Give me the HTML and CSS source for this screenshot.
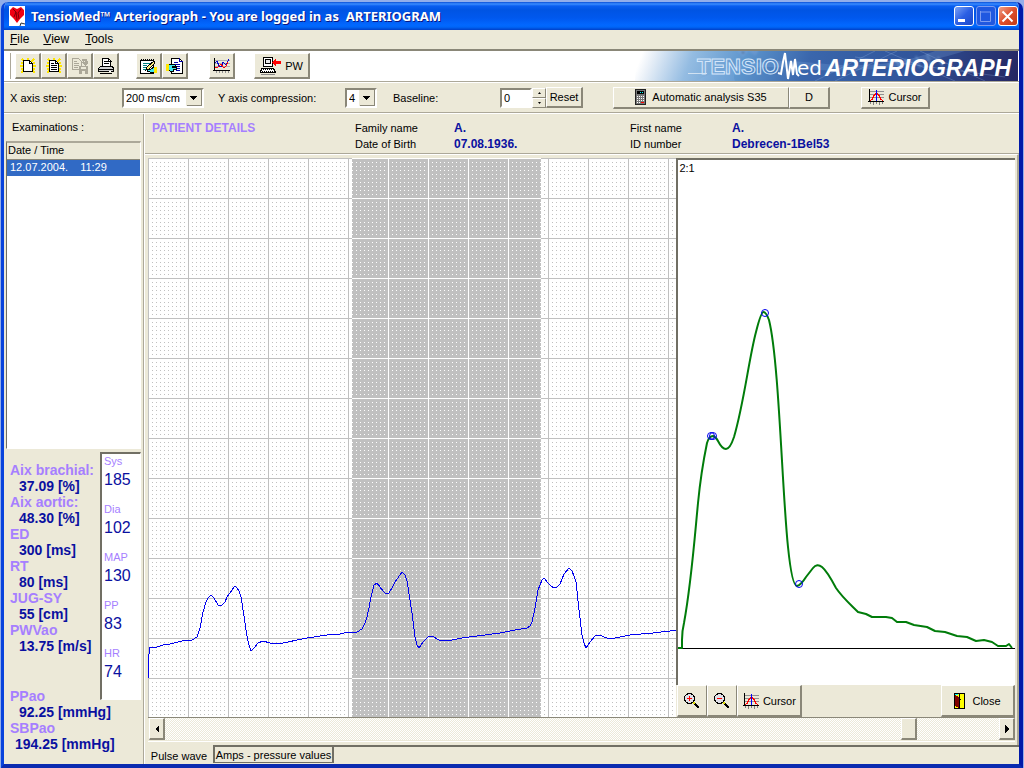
FILE: index.html
```html
<!DOCTYPE html>
<html lang="en">
<head>
<meta charset="utf-8">
<title>TensioMed Arteriograph</title>
<link rel="stylesheet" href="styles.css">
</head>
<body>
<svg class="defs" width="0" height="0" aria-hidden="true">
  <defs>
    <symbol id="page" viewBox="0 0 16 16">
      <path d="M2 1l3 3M8 0v2M14 1l-3 3M0 8h3M1 15l3-3M13 8h3M15 15l-2-2M1 5h2M13 5h2M1 11h2M13 11h2" stroke="#ffe600" stroke-width="2"/>
      <path d="M3.500 2.500h6l3 3v8h-9z" fill="#fff" stroke="#000"/>
      <path d="M9.500 2.500v3h3" fill="none" stroke="#000"/>
    </symbol>
    <symbol id="cursor" viewBox="0 0 16 16">
      <path d="M1 2.500h15M1 5.500h15M1 8.500h15" stroke="#909090"/>
      <path d="M1.500 0v13M0 12.500h16" stroke="#000" fill="none"/>
      <path d="M2.500 13v2M5.500 13v3M8.500 13v2M11.500 13v3M14.500 13v2" stroke="#808080" fill="none"/>
      <path d="M2 11.500l2-1 2-4 2-2h1l2 2 2 4 2 1" stroke="#f00" fill="none"/>
      <path d="M8.500 1v11" stroke="#00f"/>
    </symbol>
    <symbol id="lens" viewBox="0 0 16 16">
      <path d="M9 9l2 2" stroke="#dede00" stroke-width="2"/>
      <path d="M11 11l4 4" stroke="#000" stroke-width="2"/>
      <circle cx="5.500" cy="5.500" r="5" fill="#e0e0e8" stroke="#000"/>
      <path d="M3 5.500h5" stroke="#f00"/>
    </symbol>
    <pattern id="grid" width="40" height="40" patternUnits="userSpaceOnUse">
      <rect width="40" height="40" fill="#fff"/>
      <path d="M0 .5h40M.5 0v40" stroke="#c0c0c0"/>
      <path d="M4 4.500h36M4 8.500h36M4 12.500h36M4 16.500h36M4 20.500h36M4 24.500h36M4 28.500h36M4 32.500h36M4 36.500h36" stroke="#c0c0c0" stroke-dasharray="1 3"/>
    </pattern>
    <pattern id="grid-selected" width="40" height="40" patternUnits="userSpaceOnUse">
      <rect width="40" height="40" fill="#c0c0c0"/>
      <path d="M0 .5h40M.5 0v40" stroke="#fff"/>
      <path d="M4 4.500h36M4 8.500h36M4 12.500h36M4 16.500h36M4 20.500h36M4 24.500h36M4 28.500h36M4 32.500h36M4 36.500h36" stroke="#fff" stroke-dasharray="1 3"/>
    </pattern>
  </defs>
</svg>
<div class="window">
  <header class="titlebar">
    <svg class="app-icon" width="16" height="20" viewBox="0 0 16 20">
      <path d="M0 0h16v20H0z" fill="#fff"/>
      <path d="M1 4l3-3 4 2 4-2 3 3v5l-4 4-3 4-3-4-4-4z" fill="#f00012"/>
      <path d="M4 3l3 3-2 5M12 3l-3 4 1 6M7 6l1 8" stroke="#7c0008" fill="none"/>
      <path d="M11 20l1-3 4 1" fill="#dfe8f8" stroke="#333"/>
    </svg>
    <h1 class="title">TensioMed™ Arteriograph - You are logged in as&nbsp; ARTERIOGRAM</h1>
    <div class="window-buttons">
      <button class="wb" aria-label="Minimize"><svg width="19" height="19"><path d="M4 12h7v3H4z" fill="#fff"/></svg></button>
      <button class="wb wb-off" aria-label="Maximize" disabled><svg width="19" height="19"><path d="M4.500 4v10.500h10V5M4 5h11" fill="none" stroke="#7d9cf0"/></svg></button>
      <button class="wb wb-close" aria-label="Close window"><svg width="19" height="19"><path d="M4.500 4.500l10 10M14.500 4.500l-10 10" stroke="#fff" stroke-width="2"/></svg></button>
    </div>
  </header>
  <nav class="menu">
    <button><u>F</u>ile</button><button><u>V</u>iew</button><button><u>T</u>ools</button>
  </nav>
  <div class="banner">
    <div class="tools">
      <span class="grip"></span>
      <div class="tool-group">
        <button class="raised tool" aria-label="New"><svg class="px" width="16" height="16"><use href="#page"/></svg></button>
        <button class="raised tool" aria-label="Open"><svg class="px" width="16" height="16"><use href="#page"/><path d="M5 5.500h3M5 7.500h6M5 9.500h6M5 11.500h6" stroke="#000"/></svg></button>
        <button class="raised tool" aria-label="Save" disabled><svg class="px" width="16" height="16"><path d="M.5.500h6l3 3v8h-9zM2 3.500h3M2 5.500h5M2 7.500h5M2 9.500h4" fill="none" stroke="#aca899"/><path d="M10 1.500h3.500v4M11 4l2.500 2.500L16 4" fill="none" stroke="#aca899" stroke-width="2"/><path d="M7 8h9v8H7z" fill="#aca899"/><path d="M9 9h5v2H9zM10 13h3v3h-3z" fill="#ece9d8"/></svg></button>
        <button class="raised tool" aria-label="Print"><svg class="px" width="16" height="16"><path d="M4.500.500h6l2 2v6h-8z" fill="#fff" stroke="#000"/><path d="M6 3.500h4M6 5.500h5M10.500 0v3h3" stroke="#000" fill="none"/><path d="M2.500 8.500h12l1 2v3H.5v-3z" fill="#d0d0d0" stroke="#000"/><path d="M1 11.500h14M2 15.500h12" stroke="#000"/><path d="M11 13h2" stroke="#fff"/></svg></button>
      </div>
      <div class="tool-group">
        <button class="raised tool" aria-label="Edit patient"><svg class="px" width="17" height="16"><path d="M.5 2.500h13v13H.5z" fill="#fff" stroke="#000"/><path d="M1 1.500h14" stroke="#000" stroke-width="2" stroke-dasharray="1 1"/><path d="M3 5.500h7M3 7.500h4M3 9.500h3M3 11.500h4" stroke="#008080"/><path d="M14 3l-7 6-1 3 3-1 6-6z" fill="#ffec80" stroke="#000"/><path d="M7 11h4l3-2 1 5h-5l-3-1z" fill="#40e8f0" stroke="#000"/><path d="M14 9h3v6h-3z" fill="#ffe800"/></svg></button>
        <button class="raised tool" aria-label="Patient record"><svg class="px" width="17" height="16"><path d="M5.500.500h8l3 3v12h-11z" fill="#fff" stroke="#000"/><path d="M13.500 0v3.500h3M8 4.500h4M8 6.500h6M8 8.500h6M10 10.500h4M10 12.500h4" stroke="#00a" fill="none"/><path d="M3 6h5l2 2H6v1h4v2H7v2H4l-2-2z" fill="#40e8f0" stroke="#000"/><path d="M0 6h3v7H0z" fill="#ffe800"/></svg></button>
      </div>
      <div class="tool-group chart-group">
        <button class="raised tool" aria-label="Charts"><svg class="px" width="17" height="16"><path d="M1 2.500h16M1 5.500h16M1 8.500h16" stroke="#b0b0b0"/><path d="M1.500 0v13M0 12.500h17" stroke="#000" fill="none"/><path d="M3.500 13v2M6.500 13v2M9.500 13v2M12.500 13v2M15.500 13v2" stroke="#909090" fill="none"/><path d="M2 5l2-2 2 5 2 1 2-5 3 3 3-6" stroke="#0000d0" fill="none"/><path d="M2 10l3-1 3-3 3 4 2-2 2-4" stroke="#f00" fill="none"/></svg></button>
      </div>
      <button class="raised tool pw"><svg class="px" width="21" height="18"><path d="M3.500.500h9v9h-9z" fill="#fff" stroke="#000"/><path d="M5.500 2.500h5v4h-5z" fill="#e8e8e8" stroke="#000"/><path d="M1.500 11.500h12l2 4H.5z" fill="#fff" stroke="#000"/><path d="M3 12.500h10M2 14.500h12" stroke="#000" stroke-dasharray="1 1"/><path d="M1 17h14" stroke="#888"/><path d="M12 5.500l4-4V4h5v3h-5v2.500z" fill="#f00"/></svg>PW</button>
    </div>
    <svg class="logo" width="384" height="30" viewBox="0 0 384 30" role="img" aria-label="TensioMed Arteriograph">
      <defs>
        <linearGradient id="sky" gradientUnits="userSpaceOnUse" x1="8" y1="0" x2="379" y2="140">
          <stop offset="0" stop-color="#fff"/><stop offset=".03" stop-color="#e6eef7"/><stop offset=".12" stop-color="#94bce2"/><stop offset=".25" stop-color="#5c94cc"/><stop offset=".4" stop-color="#3a66ac"/><stop offset=".65" stop-color="#30549a"/><stop offset=".9" stop-color="#252763"/>
        </linearGradient>
      </defs>
      <path d="M0 0h383v30H0z" fill="url(#sky)"/>
      <path d="M60 30Q110 4 180 12t120-12h30Q250 25 170 18T100 30z" fill="#8fc0ee" opacity=".2"/>
      <path d="M180 30L240 0M200 30L262 0M250 0l70 30M285 0l65 30M220 6l150 20" stroke="#a8c8f0" opacity=".25" fill="none"/>
      <path class="ghost" d="M104 0h8l-4 4zM116 0h6l-2 3zM254 12l3 6M262 10l3 7M270 8l4 8M281 5l4 12M292 3l6 18M303 6l5 10" stroke="#7ea4da" stroke-width="2" opacity=".5"/>
      <path d="M53 22.500h19" stroke="#fff" opacity=".6"/>
      <text class="logo-outline" x="62" y="23">TENSIO</text>
      <path d="M143 22l3 1 2-12 2-9 3 26 3-18 2 14 2-16 2 15 2 2" fill="none" stroke="#fff" stroke-width="2"/>
      <text class="logo-script" x="162" y="24">ed</text>
      <text class="logo-main" x="190" y="25">ARTERIOGRAPH</text>
    </svg>
  </div>
  <div class="controls">
    <label class="lb-x" for="x-step">X axis step:</label>
    <select class="combo combo-x" id="x-step"><option>200 ms/cm</option></select>
    <label class="lb-y" for="y-comp">Y axis compression:</label>
    <select class="combo combo-y" id="y-comp"><option>4</option></select>
    <label class="lb-base" for="baseline">Baseline:</label>
    <input class="field" id="baseline" type="text" value="0">
    <div class="spin">
      <button class="raised" aria-label="Increase"><svg width="3" height="2"><path d="M0 2l1.500-2L3 2z"/></svg></button>
      <button class="raised" aria-label="Decrease"><svg width="3" height="2"><path d="M0 0l1.500 2L3 0z"/></svg></button>
    </div>
    <button class="raised reset">Reset</button>
    <button class="raised auto"><svg class="px" width="11" height="16"><path d="M0 0h11v16H0z" fill="#222"/><path d="M1 1h9v14H1z" fill="#777"/><path d="M2 2h7v3H2z" fill="#000"/><path d="M5 3.500h3" stroke="#0ff" stroke-dasharray="1 1"/><path d="M2 7.500h7M2 9.500h7M2 11.500h7" stroke="#fff" stroke-dasharray="1 1"/><path d="M2 13.500h3" stroke="#fff" stroke-dasharray="1 1"/><path d="M6 13.500h3" stroke="#f00"/></svg>Automatic analysis S35</button>
    <button class="raised dee">D</button>
    <button class="raised cur"><svg class="px" width="16" height="16"><use href="#cursor"/></svg>Cursor</button>
  </div>
  <main class="work">
    <aside class="side">
      <h2 class="side-title">Examinations :</h2>
      <div class="list">
        <table>
          <thead><tr><th>Date / Time</th></tr></thead>
          <tbody><tr><td>12.07.2004.<span class="time">11:29</span></td></tr></tbody>
        </table>
      </div>
      <div class="stats">
        <dl class="indices">
          <dt>Aix brachial:</dt><dd>37.09 [%]</dd>
          <dt>Aix aortic:</dt><dd>48.30 [%]</dd>
          <dt>ED</dt><dd>300 [ms]</dd>
          <dt>RT</dt><dd>80 [ms]</dd>
          <dt>JUG-SY</dt><dd>55 [cm]</dd>
          <dt>PWVao</dt><dd>13.75 [m/s]</dd>
        </dl>
        <dl class="vitals">
          <dt>Sys</dt><dd>185</dd>
          <dt>Dia</dt><dd>102</dd>
          <dt>MAP</dt><dd>130</dd>
          <dt>PP</dt><dd>83</dd>
          <dt>HR</dt><dd>74</dd>
        </dl>
        <dl class="indices central">
          <dt>PPao</dt><dd>92.25 [mmHg]</dd>
          <dt>SBPao</dt><dd class="wide">194.25 [mmHg]</dd>
        </dl>
      </div>
    </aside>
    <section class="main">
      <div class="patient">
        <h2>PATIENT DETAILS</h2>
        <span>Family name</span><b>A.</b><span>First name</span><b>A.</b>
        <span class="second">Date of Birth</span><b>07.08.1936.</b><span>ID number</span><b>Debrecen-1Bel53</b>
      </div>
      <div class="sheet">
        <div class="views">
          <svg class="pulse px" role="img" aria-label="Pulse wave">
            <rect width="100%" height="100%" fill="url(#grid)"/>
            <rect x="204" width="189" height="100%" fill="url(#grid-selected)"/>
            <polyline transform="translate(-148 -158)" fill="none" stroke="#0000f0" points="148.500,678 148.500,660 149.500,648 157,647 163,645 170,644 182,641 192,640 197,637 200,628 203,612 206,602 208,598 211,595 214,598 218,605 222,605 225,602 227,597 232,590 235,586 237,588 239,591 241,597 242,603 245,623 247,636 249,645 251,651 255,647 258,643 263,641 270,643 277,644 283,643 307,638 327,635 340,634 348,632 357,632 362,629 365,623 367,617 369,608 371,597 374,585 377,583 380,587 383,591 386,594 389,593 392,588 395,582 402,572 405,575 407,581 408,587 412,613 415,637 417,645 419,648 423,642 428,637 432,636 439,640 452,640 462,638 477,636 500,633 515,630 527,628 530,626 532,622 535,608 538,590 542,580 544,578 548,583 551,586 554,588 557,587 560,584 564,574 569,568 572,571 574,576 576,582 579,610 582,635 584,643 586,648 590,642 596,635 602,636 609,639 615,638 630,635 653,633 678,630"/>
          </svg>
          <div class="detail">
            <div class="beat">
              <svg role="img" aria-label="Averaged beat">
                <path d="M0 488.500h100000" stroke="#000"/>
                <g transform="translate(-679 -160)" fill="none">
                  <path stroke="#007c0a" stroke-width="2" stroke-linejoin="round" d="M678 648H683V640Q683 631 685 623C692 585 695 545 699 503Q702 472 708 443Q710 436 714 436Q717 437 719 441Q723 449 727 449Q731 449 735 437C745 403 750 358 757 332Q762 312 764.500 312Q767 312 770 320C780 360 783 490 789 547Q793 586 798 586Q802 585 807 577L814 568Q818 563 823 567Q828 571 837 588C843 597 850 603 859 612L867 614 873 617H887L893 618 898 622 907 622 915 625 928 627 936 631 946 632 958 636 968 637 977 641 985 640 993 642 999 646H1007L1010 644 1013 648"/>
                  <g stroke="#0000f0"><circle cx="712" cy="436" r="3.500"/><circle cx="714" cy="436" r="3.500"/><circle cx="766" cy="313" r="3.500"/><circle cx="800" cy="584" r="3.500"/></g>
                </g>
              </svg>
              <span class="ratio">2:1</span>
            </div>
            <div class="actions">
              <button class="raised zoom" aria-label="Zoom in"><svg class="px" width="16" height="16"><use href="#lens"/><path d="M5.500 3v5" stroke="#f00"/></svg></button>
              <button class="raised zoom" aria-label="Zoom out"><svg class="px" width="16" height="16"><use href="#lens"/></svg></button>
              <button class="raised cursor2"><svg class="px" width="16" height="16"><use href="#cursor"/></svg>Cursor</button>
              <button class="raised close"><svg class="px" width="11" height="16"><path d="M.5.500h10v15H.5z" fill="#ff0" stroke="#000"/><path d="M1 1h3v1H1z" fill="#0ff"/><path d="M1 2l4 2v11l-4-2z" fill="#800000"/><path d="M5 1v14M6 6h1" stroke="#000"/></svg>Close</button>
            </div>
          </div>
        </div>
        <div class="scroller">
          <button class="raised" aria-label="Scroll left"><svg class="px" width="4" height="8"><path d="M4 0v8L0 4z"/></svg></button>
          <input type="range" min="0" max="100" value="90" aria-label="Scroll position">
          <button class="raised" aria-label="Scroll right"><svg class="px" width="4" height="8"><path d="M0 0v8l4-4z"/></svg></button>
        </div>
      </div>
      <div class="tabs" role="tablist">
        <button class="tab tab-on" role="tab" aria-selected="true">Pulse wave</button>
        <button class="tab tab-off" role="tab" aria-selected="false">Amps - pressure values</button>
        <span class="tab-rest"></span>
      </div>
    </section>
  </main>
</div>
</body>
</html>
```
FILE: styles.css
```css
* { box-sizing: border-box; }
body {
  margin: 0;
  padding: 2px 1px 0;
  height: 100vh;
  background: #93aeea;
  font: 11px/16px "Liberation Sans", Arial, sans-serif;
  color: #000;
  overflow: hidden;
}
h1, h2 { margin: 0; font-size: inherit; font-weight: normal; }
dl, dd { margin: 0; }
button, input, select { font: inherit; color: inherit; margin: 0; padding: 0; border-radius: 0; }
svg { display: block; flex: none; }
.defs { position: absolute; }
.px { shape-rendering: crispEdges; }

.window {
  display: flex;
  flex-direction: column;
  height: 100%;
  border: solid;
  border-width: 0 4px 4px 3px;
  border-color: #0831d9 #0019a8 #0a2bb0 #0843dc;
  border-radius: 7px 7px 0 0;
  background: #ece9d8;
  overflow: hidden;
}
.titlebar {
  display: flex;
  align-items: center;
  gap: 6px;
  height: 28px;
  margin: 0 -4px 0 -3px;
  padding: 0 5px 0 8px;
  background: linear-gradient(#0a4fd8, #3a8cff 2px, #0a5ef0 4px, #0054e3 8px, #0058ee 16px, #0268ff 23px, #0066f8 25px, #0040c8);
}
.title {
  flex: 1;
  font: bold 13px/20px "Noto Sans", "Open Sans", sans-serif;
  color: #fff;
  text-shadow: 1px 1px 0 #0a1883;
  white-space: nowrap;
}
.window-buttons { display: flex; gap: 2px; }
.wb {
  width: 20px;
  height: 20px;
  border: 1px solid #fff;
  border-radius: 3px;
  background: linear-gradient(135deg, #7ba2f5, #2b5fe4 50%, #1c48c8);
}
.wb svg { margin: -1px; }
.wb-off { border-color: #7d9cf0; background: #2058e0; }
.wb-close { background: linear-gradient(135deg, #f0a088, #dd4f2c 50%, #c23a14); }

.menu { display: flex; gap: 14px; height: 19px; padding: 0 6px; }
.menu button { border: 0; background: none; font-size: 12px; line-height: 17px; }
.menu button:last-child { padding-left: 2px; }

.raised {
  display: flex;
  align-items: center;
  justify-content: center;
  border: solid;
  border-width: 1px 2px 2px 1px;
  border-color: #fff #8a8778 #8a8778 #fff;
  background: #ece9d8;
  white-space: nowrap;
}
.banner {
  display: flex;
  justify-content: space-between;
  height: 33px;
  border-top: 2px solid #8a8778;
  border-bottom: 1px solid #aca899;
  background: #fff;
}
.tools { display: flex; align-items: center; padding-left: 5px; }
.grip { width: 2px; height: 26px; margin-right: 4px; border-right: 1px solid #aca899; }
.tool-group { display: flex; margin-right: 17px; }
.chart-group { margin: 0 19px 0 4px; }
.tool { width: 26px; height: 26px; }
.pw { width: 56px; gap: 4px; }
.ghost { filter: blur(1px); }
.logo-outline { font: bold 22px "Liberation Sans", sans-serif; fill: none; stroke: #d4e6fa; stroke-width: 1px; }
.logo-script { font: 20px "DejaVu Sans", sans-serif; fill: #fff; }
.logo-main { font: italic bold 23px "Liberation Sans", sans-serif; fill: #fff; }

.controls {
  display: flex;
  align-items: center;
  height: 31px;
  padding-left: 6px;
  border-top: 1px solid #fff;
  border-bottom: 1px solid #aca899;
}
.combo, .field {
  height: 20px;
  padding: 0 2px;
  border: 2px solid;
  border-color: #8a8778 #fff #fff #8a8778;
  background: #fff;
}
.combo {
  appearance: none;
  background:
    linear-gradient(#000, #000) right 5px top 6px / 7px 1px no-repeat,
    linear-gradient(#000, #000) right 6px top 7px / 5px 1px no-repeat,
    linear-gradient(#000, #000) right 7px top 8px / 3px 1px no-repeat,
    linear-gradient(#000, #000) right 8px top 9px / 1px 1px no-repeat,
    linear-gradient(#8a8778, #8a8778) right 0 bottom 0 / 15px 1px no-repeat,
    linear-gradient(#8a8778, #8a8778) right 0 top 0 / 1px 16px no-repeat,
    linear-gradient(#ece9d8, #ece9d8) right 0 top 0 / 16px 16px no-repeat,
    #fff;
}
.combo-x { width: 82px; }
.combo-y { width: 32px; }
.lb-x { width: 112px; }
.lb-y { width: 127px; margin-left: 14px; }
.lb-base { width: 107px; margin-left: 16px; }
.field { width: 32px; }
.spin { display: grid; width: 14px; height: 20px; grid-template-rows: 1fr 1fr; }
.spin .raised { border-width: 1px; }
.reset { width: 37px; height: 21px; }
.auto { width: 176px; height: 22px; margin-left: 30px; gap: 6px; border-right-width: 1px; }
.dee { width: 41px; height: 22px; }
.cur { width: 69px; height: 22px; margin-left: 31px; gap: 4px; }

.work { display: flex; flex: 1; min-height: 0; border-top: 1px solid #fff; }
.side {
  display: flex;
  flex-direction: column;
  width: 140px;
  padding: 5px 2px 1px 2px;
  border-right: 1px solid #aca899;
}
.side-title { padding-left: 6px; margin-bottom: 6px; }
.list {
  flex: 1;
  min-height: 0;
  border: solid;
  border-width: 2px 1px 1px 1px;
  border-color: #aca899 #fff #fff #716f64;
  background: #fff;
}
.list table { width: 100%; border-collapse: collapse; }
.list th { height: 16px; padding: 0 0 0 1px; border-bottom: 1px solid #8a8778; background: #ece9d8; text-align: left; font-weight: normal; line-height: 15px; }
.list td { height: 17px; padding: 0 0 0 3px; background: #316ac5; color: #fff; line-height: 15px; }
.time { margin-left: 12px; }
.stats {
  display: grid;
  grid-template-columns: 94px 1fr;
  padding-top: 3px;
}
.indices { padding: 10px 0 0 4px; font: bold 14px/16px "Liberation Sans", Arial, sans-serif; white-space: nowrap; }
.indices dt { color: #a67fff; }
.indices dd { padding-left: 9px; color: #0a10a0; }
.indices .wide { padding-left: 5px; }
.indices.central { grid-column: 1 / 3; margin-top: -12px; padding: 0 0 11px 4px; }
.vitals {
  height: 248px;
  padding: 0 0 0 2px;
  border: solid;
  border-width: 2px 1px 1px 2px;
  border-color: #716f64 #fff #fff #716f64;
  background: #fff;
}
.vitals dt { color: #a67fff; line-height: 14px; }
.vitals dd { height: 34px; color: #0a10a0; font-size: 16px; line-height: 24px; }

.main { display: flex; flex-direction: column; flex: 1; min-width: 0; border-left: 1px solid #fff; }
.patient {
  display: grid;
  grid-template-columns: 203px 99px 176px 102px 1fr;
  align-content: start;
  height: 40px;
  padding: 6px 0 0 7px;
  border-bottom: 1px solid #aca899;
}
.patient h2 { font-size: 12px; font-weight: bold; color: #a67fff; }
.patient b { font-size: 12px; color: #0a10a0; }
.patient .second { grid-column: 2; }
.sheet {
  display: flex;
  flex-direction: column;
  flex: 1;
  min-height: 0;
  padding: 3px 2px 3px 3px;
  border-top: 1px solid #fff;
  border-right: 2px solid #aca899;
}
.views { display: flex; flex: 1; min-height: 0; }
.pulse { flex: 529 1 0; min-width: 0; height: 100%; }
.detail { display: flex; flex-direction: column; flex: 339 1 0; min-width: 0; }
.beat {
  position: relative;
  flex: 1;
  min-height: 0;
  border: solid #716f64;
  border-width: 2px 0 0 2px;
  background: #fff;
}
.beat svg { width: 100%; height: 100%; }
.ratio { position: absolute; left: 1px; top: 0; }
.actions { display: flex; height: 32px; padding-left: 1px; }
.zoom { width: 30px; border-right-width: 1px; }
.cursor2 { width: 65px; gap: 4px; }
.close { width: 74px; margin-left: auto; gap: 7px; }
.scroller {
  display: flex;
  height: 25px;
  padding: 0 0 1px 1px;
  border-top: 1px solid #8a8778;
  border-bottom: 1px solid #fff;
}
.scroller .raised { width: 16px; }
.scroller input {
  appearance: none;
  flex: 1;
  min-width: 0;
  height: 22px;
  background: repeating-conic-gradient(#fff 0 25%, #ece9d8 0 50%) 0 0 / 2px 2px;
}
.scroller input::-webkit-slider-thumb {
  appearance: none;
  width: 16px;
  height: 22px;
  border: solid;
  border-width: 1px 2px 2px 1px;
  border-color: #fff #8a8778 #8a8778 #fff;
  background: #ece9d8;
}
.tabs { display: flex; height: 19px; }
.tab { border: 0; background: #ece9d8; }
.tab-on { width: 68px; padding-top: 3px; }
.tab-off { width: 121px; height: 18px; border: solid #716f64; border-width: 2px 2px 1px 2px; line-height: 14px; }
.tab-rest { flex: 1; border-top: 2px solid #716f64; }
```
